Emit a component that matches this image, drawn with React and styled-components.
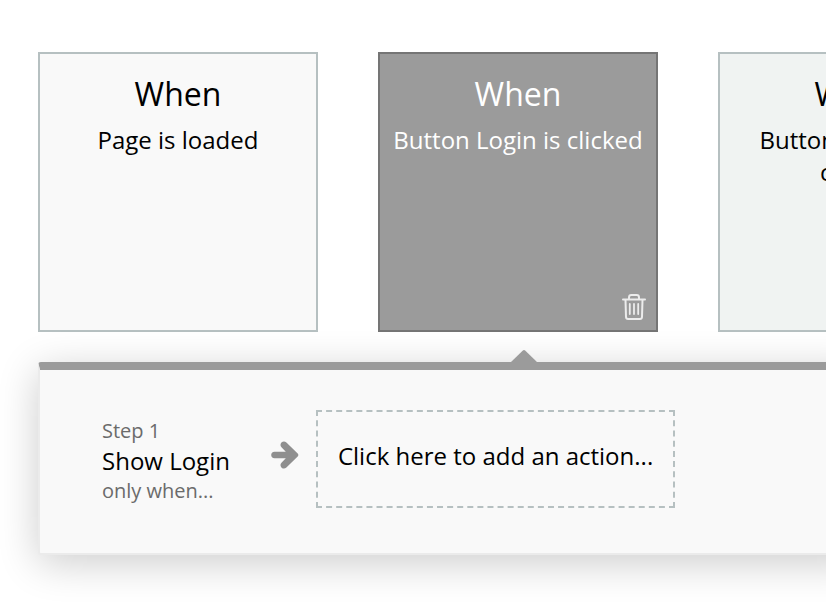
import React from 'react'
import styled, { createGlobalStyle } from 'styled-components'

const ui = {
  color: {
    white: '#ffffff',
    surface: '#f9f9f9',
    tinted: '#f0f3f2',
    border: '#b6c0c1',
    active: '#9b9b9b',
    activeBorder: '#757575',
    muted: '#6b6b6b',
    arrow: '#8f8f8f',
    edge: '#ebebeb',
    text: '#000000',
  },
  size: {
    s: '20px',
    m: '24px',
    l: '32px',
  },
}

const GlobalStyle = createGlobalStyle`
  * {
    box-sizing: border-box;
  }
  body {
    margin: 0;
    background: ${ui.color.white};
    color: ${ui.color.text};
    font-family: 'Open Sans', 'Noto Sans', sans-serif;
  }
  button {
    font: inherit;
    color: inherit;
    cursor: pointer;
  }
`

const Page = styled.main`
  padding: 52px 0 56px 38px;
  overflow: hidden;
`

const Events = styled.section`
  display: flex;
  gap: 60px;
`

const Card = styled.article`
  display: flex;
  flex: 0 0 280px;
  flex-direction: column;
  height: 280px;
  padding: 20px 8px 7px;
  text-align: center;
  color: ${props => (props.$active ? ui.color.white : ui.color.text)};
  background: ${props => (props.$active ? ui.color.active : props.$tinted ? ui.color.tinted : ui.color.surface)};
  border: 2px solid ${props => (props.$active ? ui.color.activeBorder : ui.color.border)};
  h2 {
    margin: 0;
    font-size: ${ui.size.l};
    font-weight: 400;
    line-height: 40px;
  }
  p {
    margin: 10px 0 0;
    font-size: ${ui.size.m};
    line-height: 32px;
  }
`

const DeleteButton = styled.button`
  display: flex;
  align-self: flex-end;
  margin-top: auto;
  padding: 2px;
  border: 0;
  background: none;
`

const Panel = styled.section`
  position: relative;
  margin: 30px -40px 0 0;
  background: ${ui.color.surface};
  border: 2px solid ${ui.color.edge};
  border-top: 8px solid ${ui.color.active};
  border-radius: 3px;
  box-shadow: 0 8px 40px rgba(0, 0, 0, 0.2);
`

const Pointer = styled.svg`
  position: absolute;
  top: -20px;
  left: 470px;
`

const Steps = styled.div`
  display: flex;
  align-items: flex-start;
  padding: 40px 62px 45px;
`

const Step = styled.div`
  display: flex;
  flex-direction: column;
  align-items: flex-start;
  padding-top: 6px;
  line-height: 30px;
  white-space: nowrap;
`

const StepNote = styled.span`
  font-size: ${ui.size.s};
  color: ${ui.color.muted};
`

const StepName = styled.button`
  padding: 0;
  border: 0;
  background: none;
  && {
    font-size: ${ui.size.m};
    line-height: 30px;
  }
`

const Arrow = styled.svg`
  flex: none;
  margin: 31px 17px 0 41px;
`

const AddAction = styled.button`
  height: 98px;
  padding: 0 20px 8px;
  border: 2px dashed ${ui.color.border};
  background: none;
  white-space: nowrap;
  && {
    font-size: ${ui.size.m};
  }
`

function TrashIcon() {
  return (
    <svg width="24" height="28" viewBox="0 0 24 28" fill="none" stroke="#ececec" strokeWidth="2" strokeLinecap="round">
      <path d="M1 6.5H23" />
      <path d="M7 6V4.4Q7 2 9.4 2H14.6Q17 2 17 4.4V6" />
      <path d="M3.5 7L4 24Q4.1 26 6.1 26H17.9Q19.9 26 20 24L20.5 7" />
      <path d="M7.8 11V21M12 11V21M16.2 11V21" strokeWidth="1.8" />
    </svg>
  )
}

const events = [
  { id: 1, text: 'Page is loaded' },
  { id: 2, text: 'Button Login is clicked', active: true },
  { id: 3, text: 'Button Register is clicked', tinted: true },
]

export default function App() {
  return (
    <>
      <GlobalStyle />
      <Page>
        <Events>
          {events.map(event => (
            <Card key={event.id} $active={event.active} $tinted={event.tinted}>
              <h2>When</h2>
              <p>{event.text}</p>
              {event.active && (
                <DeleteButton type="button" aria-label="Delete event">
                  <TrashIcon />
                </DeleteButton>
              )}
            </Card>
          ))}
        </Events>
        <Panel>
          <Pointer width="28" height="13" viewBox="0 0 28 13" aria-hidden="true">
            <path d="M0 13L12.6 0.7Q14 -0.5 15.4 0.7L28 13Z" fill={ui.color.active} />
          </Pointer>
          <Steps>
            <Step>
              <StepNote>Step 1</StepNote>
              <StepName type="button">Show Login</StepName>
              <StepNote>only when...</StepNote>
            </Step>
            <Arrow width="28" height="28" viewBox="0 0 28 28" aria-hidden="true">
              <path
                d="M3.5 10.7H14.8L10.7 6.6Q8.4 4.1 10.4 1.6Q12.9 -0.7 15.4 1.5L26.7 12.6Q28 14 26.7 15.4L15.4 26.5Q12.9 28.7 10.4 26.4Q8.4 23.9 10.7 21.4L14.8 17.3H3.5Q0.2 17.1 0.2 14Q0.2 10.9 3.5 10.7Z"
                fill={ui.color.arrow}
              />
            </Arrow>
            <AddAction type="button">Click here to add an action...</AddAction>
          </Steps>
        </Panel>
      </Page>
    </>
  )
}
